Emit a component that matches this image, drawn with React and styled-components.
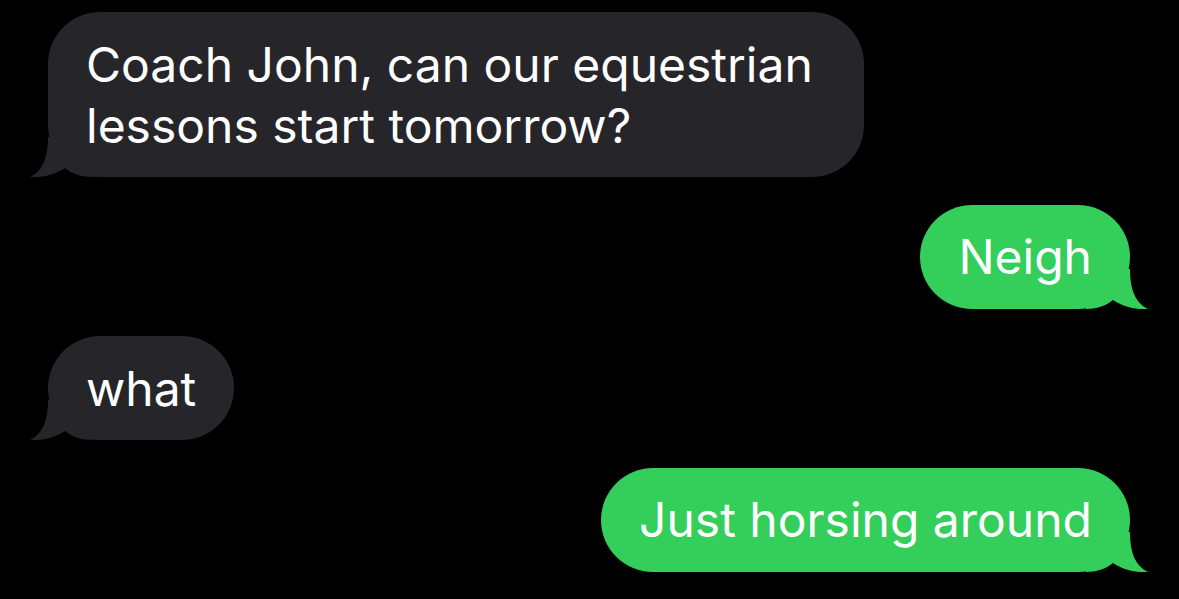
import styled, { createGlobalStyle } from "styled-components";

const GlobalStyle = createGlobalStyle`
  html, body {
    margin: 0;
    padding: 0;
    background: #000;
  }
`;

const messages = [
  { from: "them", text: "Coach John, can our equestrian lessons start tomorrow?" },
  { from: "me", text: "Neigh" },
  { from: "them", text: "what" },
  { from: "me", text: "Just horsing around" },
];

export default function App() {
  return (
    <>
      <GlobalStyle />
      <Thread>
        {messages.map((m, i) => (
          <Row key={i} $mine={m.from === "me"}>
            <Bubble $mine={m.from === "me"}>
              <Tail $mine={m.from === "me"} viewBox="0 0 62 40" aria-hidden="true">
                <path d="M20 0 L18 0 C18 22 12 34 0 40 C14 41 26 37 35 31 C42 37 52 40 62 40 L62 0 Z" />
              </Tail>
              <Text>{m.text}</Text>
            </Bubble>
          </Row>
        ))}
      </Thread>
    </>
  );
}

// Styled Components

const Thread = styled.main`
  width: 1179px;
  height: 599px;
  box-sizing: border-box;
  padding: 12px 49px 0 48px;
  display: flex;
  flex-direction: column;
  gap: 27.5px;
  background: #000;
  overflow: hidden;
`;

const Row = styled.div`
  display: flex;
  justify-content: ${(p) => (p.$mine ? "flex-end" : "flex-start")};
`;

const Bubble = styled.div`
  position: relative;
  max-width: 740px;
  padding: 21.5px 38px;
  border-radius: 52px;
  background: ${(p) => (p.$mine ? "#34ce5b" : "#26252a")};
  color: #fff;
  font-family: Inter, "Noto Sans", sans-serif;
  font-size: 48px;
  line-height: 61px;
`;

const Text = styled.span`
  position: relative;
  z-index: 1;
`;

const Tail = styled.svg`
  position: absolute;
  bottom: 0;
  width: 62px;
  height: 40px;
  fill: ${(p) => (p.$mine ? "#34ce5b" : "#26252a")};
  ${(p) => (p.$mine ? "right: -18px; transform: scaleX(-1);" : "left: -18px;")}
`;
